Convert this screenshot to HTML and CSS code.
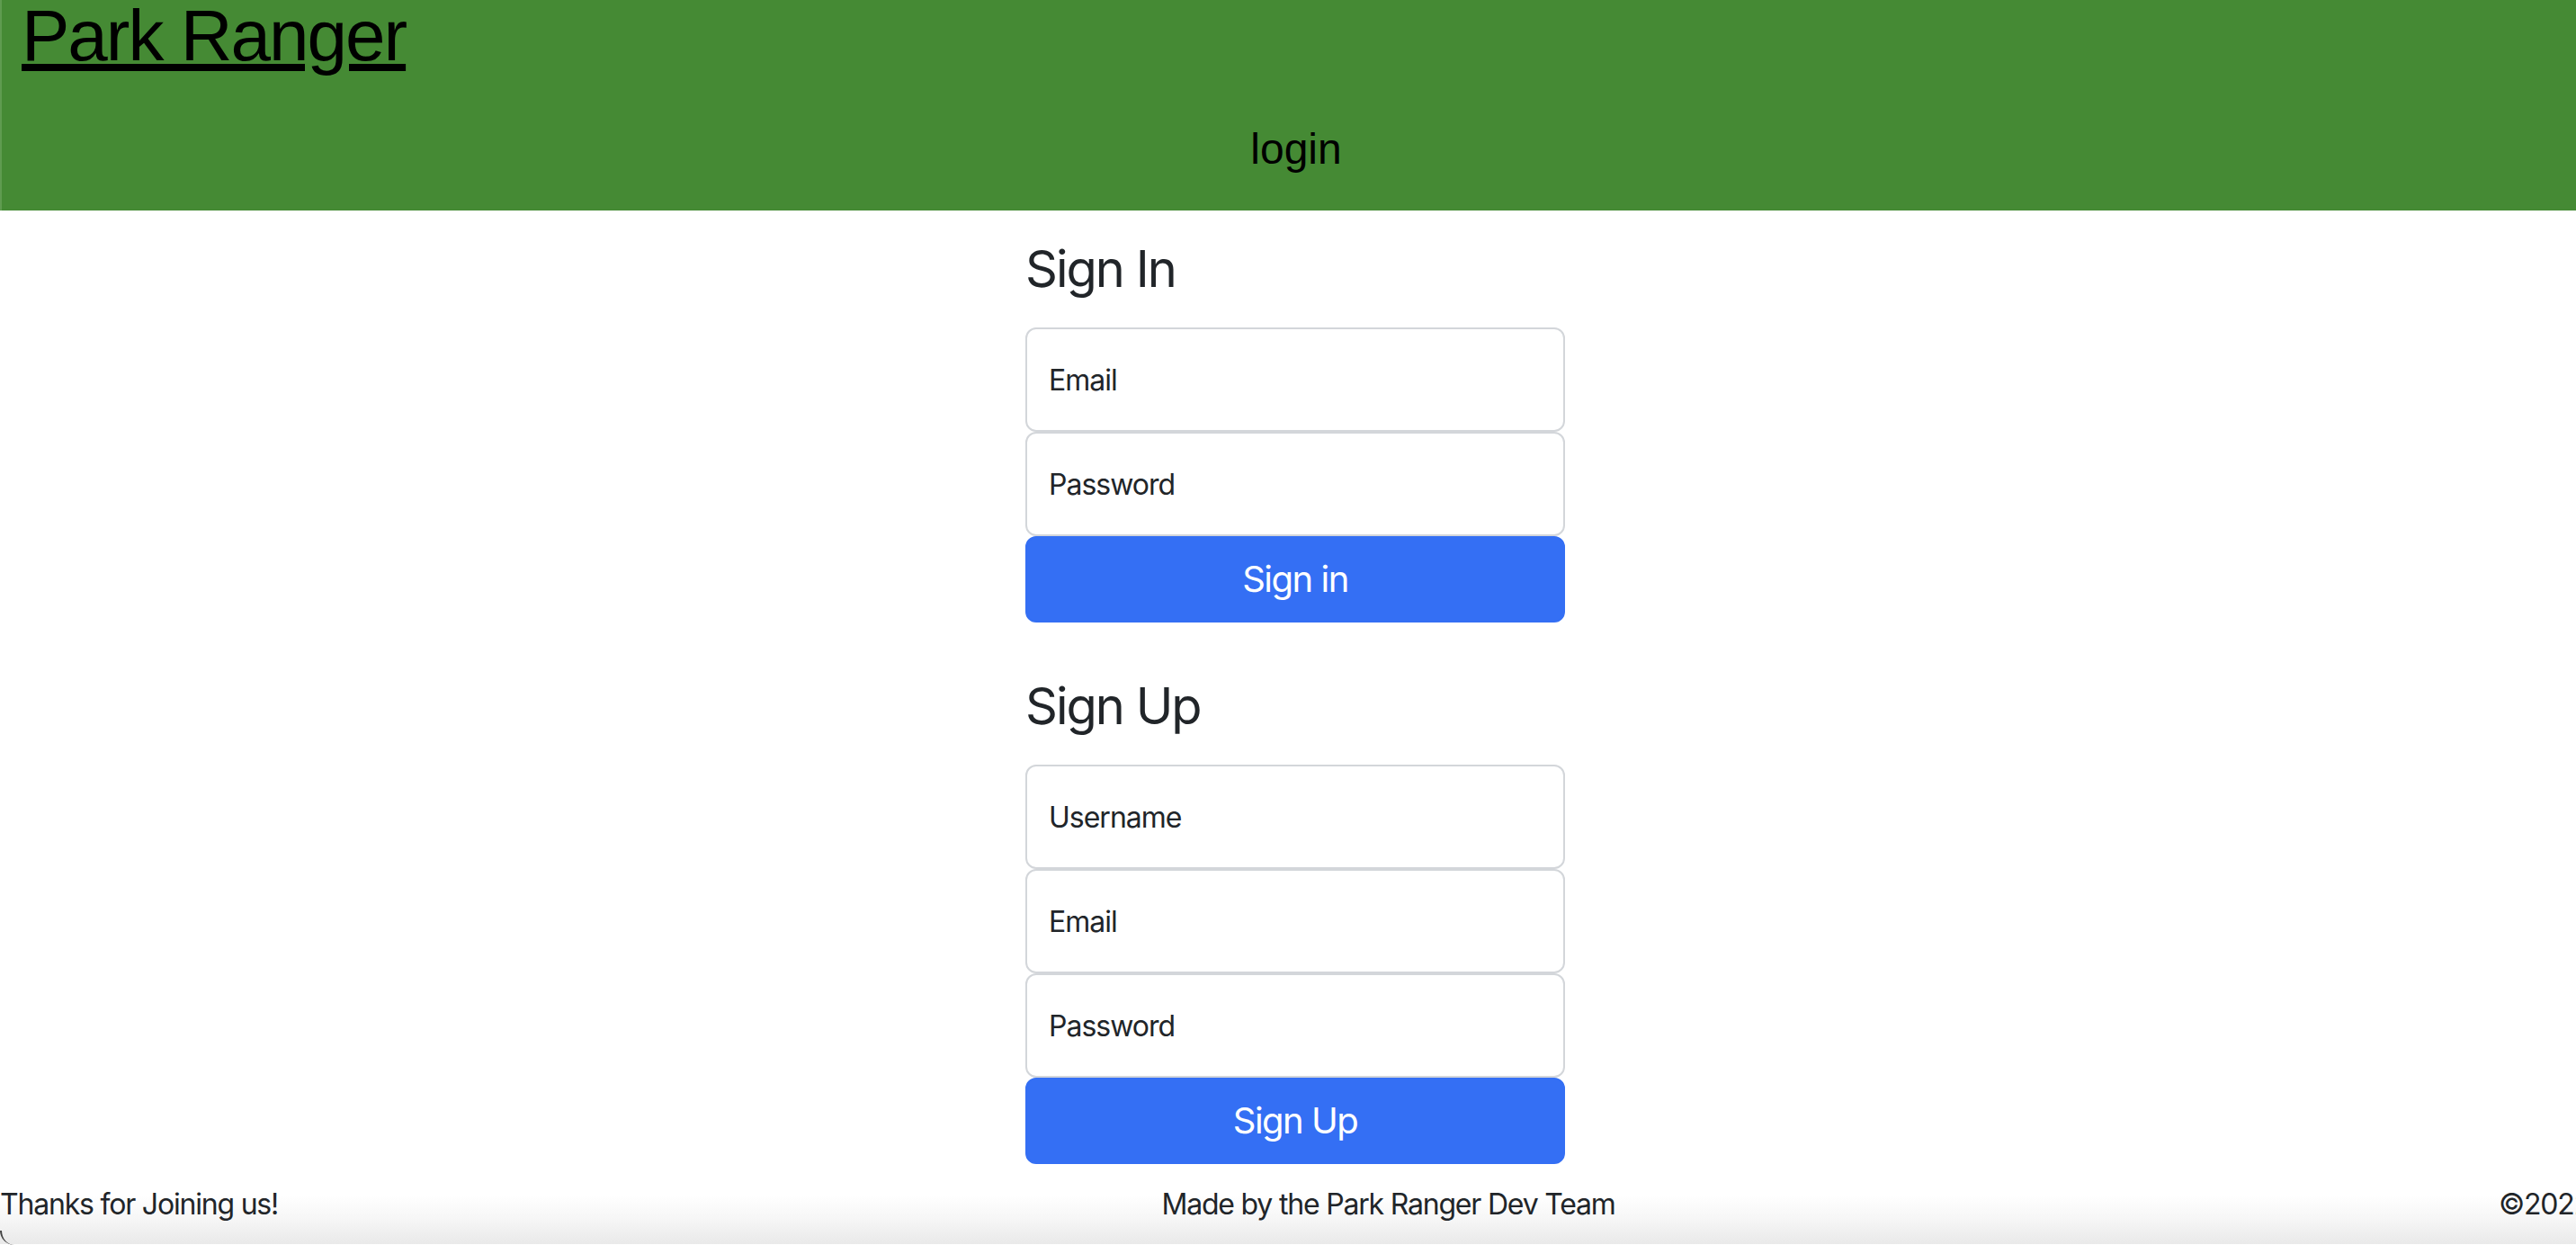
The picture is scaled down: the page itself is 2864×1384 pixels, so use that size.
FILE: index.html
```html
<!DOCTYPE html>
<html lang="en">
<head>
<meta charset="utf-8">
<title>Park Ranger</title>
<link rel="stylesheet" href="styles.css">
</head>
<body>
<div class="page">
  <header class="site-header">
    <h1 class="brand"><a href="#">Park Ranger</a></h1>
    <nav class="nav"><span class="nav-item">login</span></nav>
  </header>
  <main class="auth">
    <h3 class="auth-title">Sign In</h3>
    <form class="auth-form">
      <input class="field" type="email" placeholder="Email">
      <input class="field" type="password" placeholder="Password">
      <button class="btn" type="button">Sign in</button>
    </form>
    <h3 class="auth-title auth-title-second">Sign Up</h3>
    <form class="auth-form">
      <input class="field" type="text" placeholder="Username">
      <input class="field" type="email" placeholder="Email">
      <input class="field" type="password" placeholder="Password">
      <button class="btn" type="button">Sign Up</button>
    </form>
  </main>
  <footer class="site-footer">
    <span>Thanks for Joining us!</span>
    <span>Made by the Park Ranger Dev Team</span>
    <span>©2022</span>
  </footer>
  <div class="window-corner"></div>
</div>
</body>
</html>
```

FILE: styles.css
```css
html, body {
  margin: 0;
  padding: 0;
  overflow: hidden;
  background: #ffffff;
}

.page {
  position: relative;
  width: 2880px;
  height: 1384px;
  font-family: Inter, "Noto Sans", sans-serif;
  color: #212529;
  font-size: 32px;
  line-height: 1.5;
}

.site-header {
  background: #458a34;
  height: 234px;
  box-sizing: border-box;
  border-left: 2px solid #5f9c50;
  font-family: "Liberation Sans", Arial, sans-serif;
  color: #000;
}

.brand {
  margin: 0;
  padding-left: 22px;
  font-size: 80px;
  line-height: 80px;
  font-weight: 400;
  letter-spacing: -2px;
}

.brand a {
  color: #000;
  text-decoration: underline;
}

.nav {
  display: flex;
  justify-content: center;
  padding-top: 50px;
}

.nav-item {
  font-size: 48px;
  line-height: 72px;
  color: #000;
}

.auth {
  width: 600px;
  margin: 0 auto;
  padding-top: 32px;
}

.auth-title {
  margin: 0 0 31px;
  font-size: 56px;
  font-weight: 400;
  line-height: 1.2;
  letter-spacing: -2px;
  color: #212529;
}

.auth-title-second {
  margin-top: 60px;
}

.auth-form {
  display: flex;
  flex-direction: column;
}

.field {
  box-sizing: border-box;
  width: 100%;
  height: 116px;
  margin: 0;
  padding: 32px 24px;
  border: 2px solid #d3d6da;
  border-radius: 12px;
  font-family: Inter, "Noto Sans", sans-serif;
  font-size: 32px;
  line-height: 48px;
  letter-spacing: -1px;
  color: #212529;
  background: #fff;
  outline: none;
}

.field::placeholder {
  color: #212529;
  opacity: 1;
}

.btn {
  box-sizing: border-box;
  width: 100%;
  height: 96px;
  margin: 0;
  padding: 16px 32px;
  border: 2px solid #346ff4;
  border-radius: 12px;
  background: #346ff4;
  color: #fff;
  font-family: Inter, "Noto Sans", sans-serif;
  font-size: 40px;
  line-height: 60px;
  letter-spacing: -1.5px;
  cursor: pointer;
}

.site-footer {
  display: flex;
  justify-content: space-between;
  margin-top: 21px;
  height: 68px;
  font-size: 32px;
  line-height: 48px;
  letter-spacing: -1.2px;
  color: #212529;
  background: linear-gradient(to bottom, #ffffff 0%, #ffffff 20%, #f6f6f6 60%, #e9e9e9 100%);
}

.window-corner {
  position: absolute;
  left: 0;
  bottom: 0;
  width: 16px;
  height: 16px;
  box-sizing: border-box;
  border-left: 2px solid #444;
  border-bottom-left-radius: 16px;
}
```
